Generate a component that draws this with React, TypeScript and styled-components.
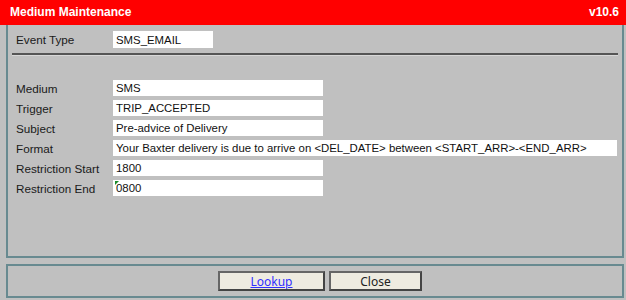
import React from "react";
import styled, { createGlobalStyle } from "styled-components";

const Global = createGlobalStyle`
  html, body { margin: 0; padding: 0; background: #c0c0c0; }
  body { font-family: "Liberation Sans", Arial, sans-serif; }
`;

const Page = styled.div`
  width: 626px;
  height: 300px;
  background: #c0c0c0;
  display: flex;
  flex-direction: column;
  overflow: hidden;
`;

const TitleBar = styled.div`
  height: 25px;
  background: #ff0000;
  color: #fff;
  font-weight: bold;
  font-size: 12px;
  display: flex;
  align-items: center;
  justify-content: space-between;
  padding: 0 7px 2px 10px;
  box-sizing: border-box;
`;

const Body = styled.div`
  display: flex;
  flex-direction: column;
  gap: 6px;
  padding: 0 2px 0 6px;
`;

const Panel = styled.div`
  height: 233px;
  box-sizing: border-box;
  border: 2px solid #688a90;
  border-top: none;
  padding: 6px 4px 0 6px;
  display: flex;
  flex-direction: column;
`;

const Footer = styled.div`
  height: 34px;
  box-sizing: border-box;
  border: 2px solid #688a90;
  display: flex;
  align-items: center;
  justify-content: center;
  gap: 4px;
  padding: 0 0 0 10px;
`;

const Row = styled.div<{ $h?: number }>`
  display: flex;
  align-items: center;
  height: ${(p) => p.$h ?? 20}px;
`;

const Label = styled.div`
  width: 99px;
  padding-left: 2px;
  box-sizing: border-box;
  font-size: 11.7px;
  color: #1a1a1a;
`;

const Field = styled.div<{ $w: number; $h?: number; $mark?: boolean }>`
  position: relative;
  width: ${(p) => p.$w}px;
  height: ${(p) => p.$h ?? 16}px;
  background: #fff;
  font-size: 11.4px;
  color: #111;
  padding-left: 3px;
  box-sizing: border-box;
  display: flex;
  align-items: center;
  white-space: nowrap;
  ${(p) =>
    p.$mark
      ? `&::before { content: ""; position: absolute; left: 2px; top: 1px; border-top: 4px solid #1a8a2a; border-right: 4px solid transparent; }`
      : ""}
`;

const Separator = styled.div`
  margin: 5px 0 0 -2px;
  height: 2px;
  background: #555;
  border-bottom: 1px solid #d8d8d8;
`;

const Fields = styled.div`
  margin-top: 22px;
  display: flex;
  flex-direction: column;
`;

const Button = styled.button<{ $w: number; $link?: boolean }>`
  width: ${(p) => p.$w}px;
  height: 20px;
  background: #eeebe0;
  border: 2px solid #444;
  border-top-color: #666;
  border-left-color: #666;
  font-family: "Noto Sans", "Open Sans", sans-serif;
  font-size: 12px;
  color: ${(p) => (p.$link ? "#3030ff" : "#222")};
  text-decoration: ${(p) => (p.$link ? "underline" : "none")};
  padding: 0;
  display: flex;
  align-items: center;
  justify-content: center;
`;

const rows: { label: string; value: string; w: number; mark?: boolean }[] = [
  { label: "Medium", value: "SMS", w: 210 },
  { label: "Trigger", value: "TRIP_ACCEPTED", w: 210 },
  { label: "Subject", value: "Pre-advice of Delivery", w: 210 },
  {
    label: "Format",
    value:
      "Your Baxter delivery is due to arrive on <DEL_DATE> between <START_ARR>-<END_ARR>",
    w: 504,
  },
  { label: "Restriction Start", value: "1800", w: 210 },
  { label: "Restriction End", value: "0800", w: 210, mark: true },
];

export default function App() {
  return (
    <Page>
      <Global />
      <TitleBar>
        <span>Medium Maintenance</span>
        <span>v10.6</span>
      </TitleBar>
      <Body>
        <Panel>
          <Row $h={17}>
            <Label>Event Type</Label>
            <Field $w={100} $h={17}>SMS_EMAIL</Field>
          </Row>
          <Separator />
          <Fields>
            {rows.map((r) => (
              <Row key={r.label}>
                <Label>{r.label}</Label>
                <Field $w={r.w} $mark={r.mark}>{r.value}</Field>
              </Row>
            ))}
          </Fields>
        </Panel>
        <Footer>
          <Button $w={107} $link>Lookup</Button>
          <Button $w={93}>Close</Button>
        </Footer>
      </Body>
    </Page>
  );
}
